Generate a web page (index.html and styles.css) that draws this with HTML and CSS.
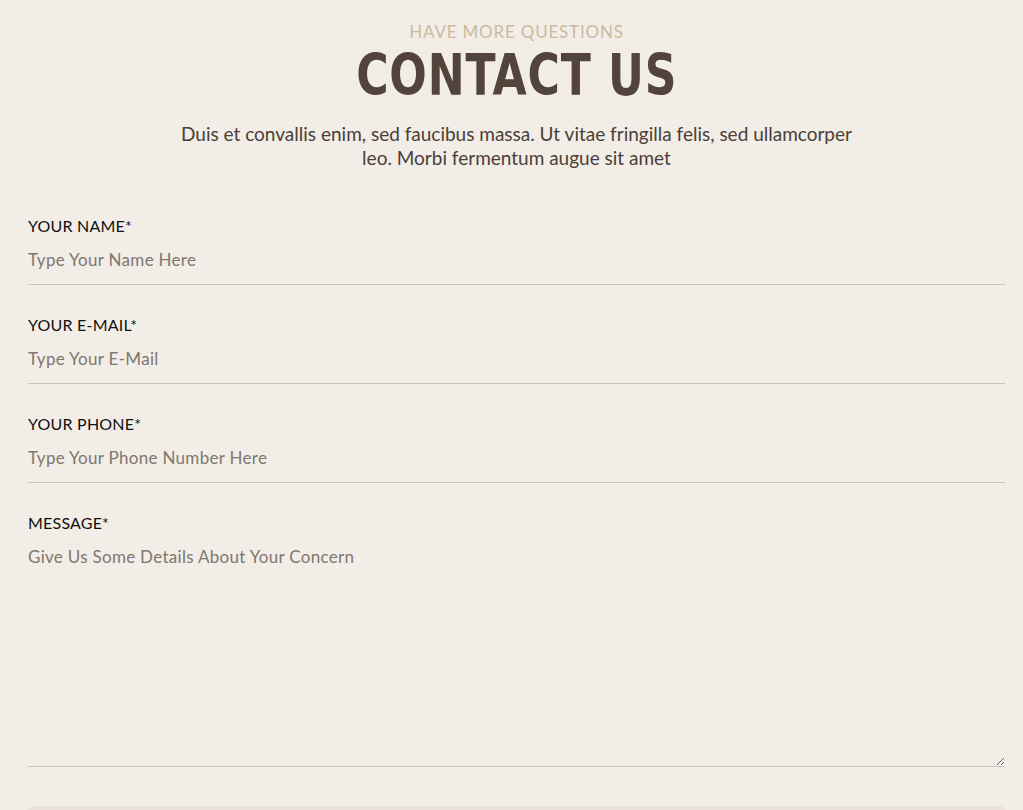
FILE: index.html
```
<!DOCTYPE html>
<html lang="en">
<head>
<meta charset="utf-8">
<title>Contact Us</title>
<link rel="stylesheet" href="styles.css">
</head>
<body>
<section class="contact">
  <header class="head">
    <p class="eyebrow">HAVE MORE QUESTIONS</p>
    <h1 class="title"><span class="title-text">CONTACT US</span></h1>
    <p class="lead">Duis et convallis enim, sed faucibus massa. Ut vitae fringilla felis, sed ullamcorper leo. Morbi fermentum augue sit amet</p>
  </header>
  <form class="form">
    <label class="field">
      <span class="label">YOUR NAME*</span>
      <input class="input" type="text" placeholder="Type Your Name Here">
    </label>
    <label class="field">
      <span class="label">YOUR E-MAIL*</span>
      <input class="input" type="email" placeholder="Type Your E-Mail">
    </label>
    <label class="field">
      <span class="label">YOUR PHONE*</span>
      <input class="input" type="tel" placeholder="Type Your Phone Number Here">
    </label>
    <label class="field">
      <span class="label">MESSAGE*</span>
      <textarea class="input area" placeholder="Give Us Some Details About Your Concern"></textarea>
    </label>
    <button class="submit" type="button" aria-label="Send message"></button>
  </form>
</section>
</body>
</html>
```
FILE: styles.css
```
html, body {
  margin: 0;
  padding: 0;
  background: #f2ede6;
}
body {
  font-family: "Lato", "Open Sans", sans-serif;
  overflow: hidden;
  height: 810px;
}
.contact {
  padding: 20px 18px 0 28px;
}
.head {
  text-align: center;
}
.eyebrow {
  margin: 0;
  font-size: 17px;
  line-height: 24px;
  color: #cdb99f;
  letter-spacing: 0.8px;
}
.title {
  margin: 0;
  font-family: "DejaVu Sans Condensed", "Liberation Sans", sans-serif;
  font-weight: 700;
  font-size: 57px;
  line-height: 62px;
  color: #52443b;
}
.title-text {
  display: inline-block;
  letter-spacing: 1px;
  transform: scaleX(0.86);
}
.lead {
  margin: 16px auto 0;
  max-width: 690px;
  font-size: 19px;
  line-height: 24px;
  color: #4a3f38;
}
.form {
  margin-top: 46px;
  display: flex;
  flex-direction: column;
}
.field {
  display: flex;
  flex-direction: column;
  border-bottom: 1px solid #cbc5bf;
  margin-bottom: 30px;
}
.label {
  font-size: 16px;
  line-height: 20px;
  letter-spacing: 0.2px;
  color: #111;
}
.input {
  margin: 0;
  padding: 14px 0 14px;
  border: 0;
  background: transparent;
  font-family: inherit;
  font-size: 17px;
  line-height: 20px;
  letter-spacing: 0.3px;
  color: #333;
  outline: none;
}
.input::placeholder {
  color: #80776f;
  opacity: 1;
}
.area {
  height: 233px;
  resize: vertical;
  box-sizing: border-box;
}
.submit {
  margin-top: 9px;
  height: 5px;
  border: 0;
  border-radius: 10px 10px 0 0;
  background: #ebe3d9;
}
```
